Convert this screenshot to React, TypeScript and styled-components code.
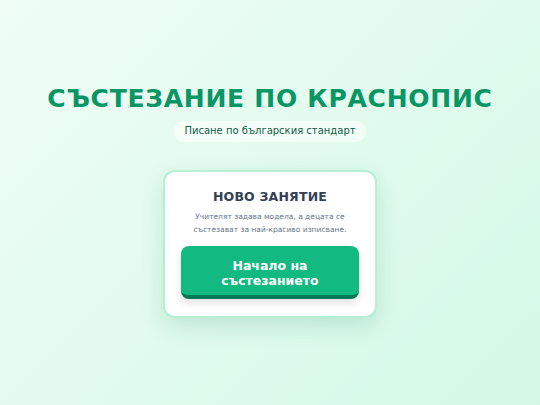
import * as React from 'react';
import styled, { createGlobalStyle } from 'styled-components';

const GlobalStyle = createGlobalStyle`
    html, body, #root {
        margin: 0;
        padding: 0;
        height: 100%;
    }
    body {
        font-family: "DejaVu Sans", Verdana, sans-serif;
    }
`

const App: React.FC = () => {
    return (
        <>
            <GlobalStyle />
            <Page>
                <Title>СЪСТЕЗАНИЕ ПО КРАСНОПИС</Title>
                <Subtitle>Писане по българския стандарт</Subtitle>
                <Card>
                    <CardTitle>НОВО ЗАНЯТИЕ</CardTitle>
                    <CardText>
                        Учителят задава модела, а децата се<br />
                        състезават за най-красиво изписване.
                    </CardText>
                    <StartButton>Начало на<br />състезанието</StartButton>
                </Card>
            </Page>
        </>
    )
}

export default App;

const Page = styled.div`
    height: 405px;
    box-sizing: border-box;
    padding-top: 84px;
    display: flex;
    flex-direction: column;
    align-items: center;
    background: linear-gradient(135deg, #effdf6 0%, #e3fbee 45%, #d2f9e6 100%);
`

const Title = styled.h1`
    margin: 0;
    font-family: "DejaVu Sans", Verdana, sans-serif;
    font-weight: bold;
    font-size: 25px;
    line-height: 30px;
    letter-spacing: 0.72px;
    color: #079664;
`

const Subtitle = styled.div`
    margin-top: 7px;
    padding: 3px 10px 4px;
    border-radius: 10px;
    background: rgba(255, 255, 255, 0.6);
    font-size: 10px;
    line-height: 14px;
    color: #0f5f45;
`

const Card = styled.div`
    margin-top: 28px;
    width: 214px;
    box-sizing: border-box;
    padding: 17px 16px 17px;
    background: #ffffff;
    border: 2px solid #b5f0d4;
    border-radius: 12px;
    box-shadow: 0 8px 22px rgba(16, 120, 80, 0.16);
    display: flex;
    flex-direction: column;
    align-items: center;
`

const CardTitle = styled.h2`
    margin: 0;
    font-size: 12.5px;
    line-height: 16px;
    font-weight: bold;
    letter-spacing: 0.2px;
    color: #334155;
`

const CardText = styled.p`
    margin: 6px 0 0;
    font-size: 7.5px;
    line-height: 12.5px;
    text-align: center;
    color: #64748b;
`

const StartButton = styled.button`
    margin-top: 10px;
    width: 178px;
    height: 53px;
    box-sizing: border-box;
    border: none;
    border-bottom: 4px solid #067a55;
    border-radius: 8px;
    background: #12b981;
    box-shadow: 0 4px 8px rgba(0, 0, 0, 0.12);
    font-family: "DejaVu Sans", Verdana, sans-serif;
    font-weight: bold;
    font-size: 12.5px;
    line-height: 15px;
    color: #ffffff;
    padding: 4px 0 0;
    cursor: pointer;
`
